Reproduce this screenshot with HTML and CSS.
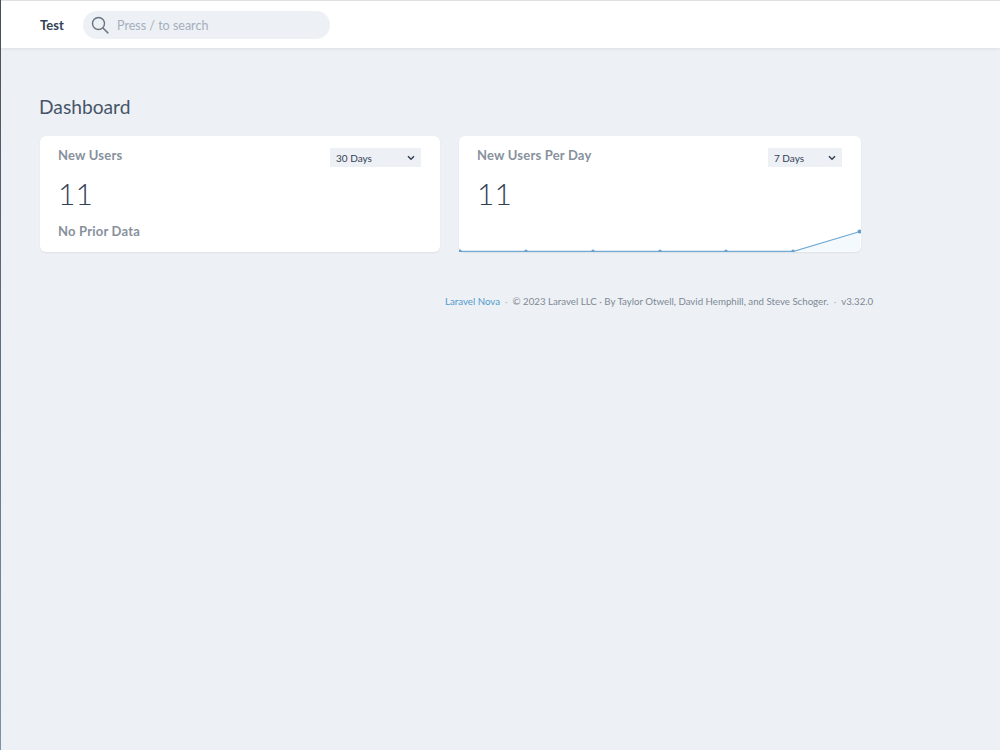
FILE: index.html
```html
<html>

<head>
<title>Dashboard</title>
<link rel="stylesheet" href="styles.css">
</head>

<body>

<div class="edge"></div>

<div class="page">

	<div class="header">
		<span class="app-name">Test</span>
		<div class="search">
			<svg class="search-icon" width="18" height="18" viewBox="0 0 24 24" fill="none" stroke="currentColor" stroke-width="1.9" stroke-linecap="round">
				<circle cx="10" cy="10" r="8"></circle>
				<path d="M16 16L22.5 22.5"></path>
			</svg>
			<span class="search-text">Press / to search</span>
		</div>
	</div>

	<div class="content">
		<h1 class="title">Dashboard</h1>

		<div class="cards">
			<div class="card">
				<div class="card-top">
					<span class="card-title">New Users</span>
					<div class="range range-wide">
						<span>30 Days</span>
						<svg width="8" height="6" viewBox="0 0 8 6" fill="none" stroke="currentColor" stroke-width="1.5"><path d="M1 1.2L4 4.2L7 1.2"></path></svg>
					</div>
				</div>
				<div class="card-value">11</div>
				<div class="card-note">No Prior Data</div>
			</div>

			<div class="card">
				<div class="card-top">
					<span class="card-title">New Users Per Day</span>
					<div class="range">
						<span>7 Days</span>
						<svg width="8" height="6" viewBox="0 0 8 6" fill="none" stroke="currentColor" stroke-width="1.5"><path d="M1 1.2L4 4.2L7 1.2"></path></svg>
					</div>
				</div>
				<div class="card-value">11</div>
				<svg class="chart" width="402" height="24" viewBox="0 0 402 24">
					<path class="chart-area" d="M0 23.5L334 23.5L401 3.5L401 18Q401 23.5 396 23.5L0 23.5Z"></path>
					<path class="chart-line" d="M0 23.5L334 23.5L401 3.5"></path>
					<circle class="chart-dot" cx="1" cy="23" r="1.6"></circle>
					<circle class="chart-dot" cx="67" cy="23" r="1.6"></circle>
					<circle class="chart-dot" cx="134" cy="23" r="1.6"></circle>
					<circle class="chart-dot" cx="201" cy="23" r="1.6"></circle>
					<circle class="chart-dot" cx="267" cy="23" r="1.6"></circle>
					<circle class="chart-dot" cx="334" cy="23" r="1.6"></circle>
					<circle class="chart-dot" cx="400.5" cy="3.5" r="2"></circle>
				</svg>
			</div>
		</div>

		<div class="footer">
			<span class="footer-link">Laravel Nova</span>
			<span class="footer-dot">·</span>
			<span>© 2023 Laravel LLC · By Taylor Otwell, David Hemphill, and Steve Schoger.</span>
			<span class="footer-dot">·</span>
			<span>v3.32.0</span>
		</div>
	</div>

</div>

</body>

</html>
```

FILE: styles.css
```css
html, body {
	margin: 0;
	padding: 0;
	height: 100%;
}

body {
	display: flex;
	overflow: hidden;
	background-color: rgb(237, 240, 244);
	font-family: "Lato", "Noto Sans", sans-serif;
}

.edge {
	width: 1px;
	background: linear-gradient(to bottom, rgb(70, 80, 90), rgb(125, 145, 170));
}

.page {
	flex-grow: 1;
}

.header {
	display: flex;
	align-items: center;
	height: 47px;
	border-top: 1px solid rgb(222, 224, 226);
	background-color: white;
	box-shadow: 0 1px 3px rgba(30, 41, 59, 0.08);
}

.app-name {
	margin-left: 39px;
	width: 43px;
	font-size: 13px;
	font-weight: 700;
	color: rgb(51, 65, 85);
}

.search {
	display: flex;
	align-items: center;
	width: 247px;
	height: 28px;
	margin-top: 1px;
	border-radius: 14px;
	background-color: rgb(237, 240, 244);
}

.search-icon {
	margin-left: 8px;
	color: rgb(105, 116, 130);
}

.search-text {
	margin-left: 8px;
	font-size: 12.5px;
	color: rgb(165, 175, 188);
}

.content {
	padding: 46px 0 0 39px;
}

.title {
	margin: 0 0 0 -1px;
	font-size: 19.2px;
	line-height: 26px;
	font-weight: 400;
	color: rgb(71, 85, 105);
}

.cards {
	display: flex;
	gap: 19px;
	margin-top: 16px;
}

.card {
	position: relative;
	box-sizing: border-box;
	width: 400px;
	height: 116px;
	padding: 11px 19px 0 18px;
	border-radius: 6px;
	background-color: white;
	box-shadow: 0 1px 2px rgba(30, 41, 59, 0.07);
}

.card + .card {
	width: 402px;
}

.card-top {
	display: flex;
	justify-content: space-between;
	align-items: flex-start;
}

.card-title, .card-note {
	font-size: 13px;
	font-weight: 700;
	color: rgb(135, 145, 156);
	letter-spacing: 0.2px;
}

.range {
	display: flex;
	justify-content: space-between;
	align-items: center;
	box-sizing: border-box;
	width: 74px;
	height: 19px;
	margin-top: 1px;
	padding: 0 6px 0 6px;
	background-color: rgb(237, 240, 244);
	font-size: 10px;
	color: rgb(51, 65, 85);
}

.range-wide {
	width: 91px;
}

.card-value {
	margin-top: 8px;
	font-size: 30px;
	line-height: 36px;
	font-weight: 300;
	color: rgb(51, 65, 85);
}

.card-note {
	margin-top: 12px;
}

.chart {
	position: absolute;
	left: 0;
	bottom: 0;
}

.chart-area {
	fill: rgb(243, 249, 253);
}

.chart-line {
	fill: none;
	stroke: rgb(112, 170, 210);
	stroke-width: 1.3;
}

.chart-dot {
	fill: rgb(100, 160, 205);
}

.footer {
	display: flex;
	gap: 5px;
	margin-top: 41px;
	margin-left: 405px;
	font-size: 9.7px;
	line-height: 16px;
	color: rgb(125, 137, 150);
	white-space: nowrap;
}

.footer-link {
	color: rgb(80, 155, 205);
}

.footer-dot {
	color: rgb(180, 188, 198);
}
```
